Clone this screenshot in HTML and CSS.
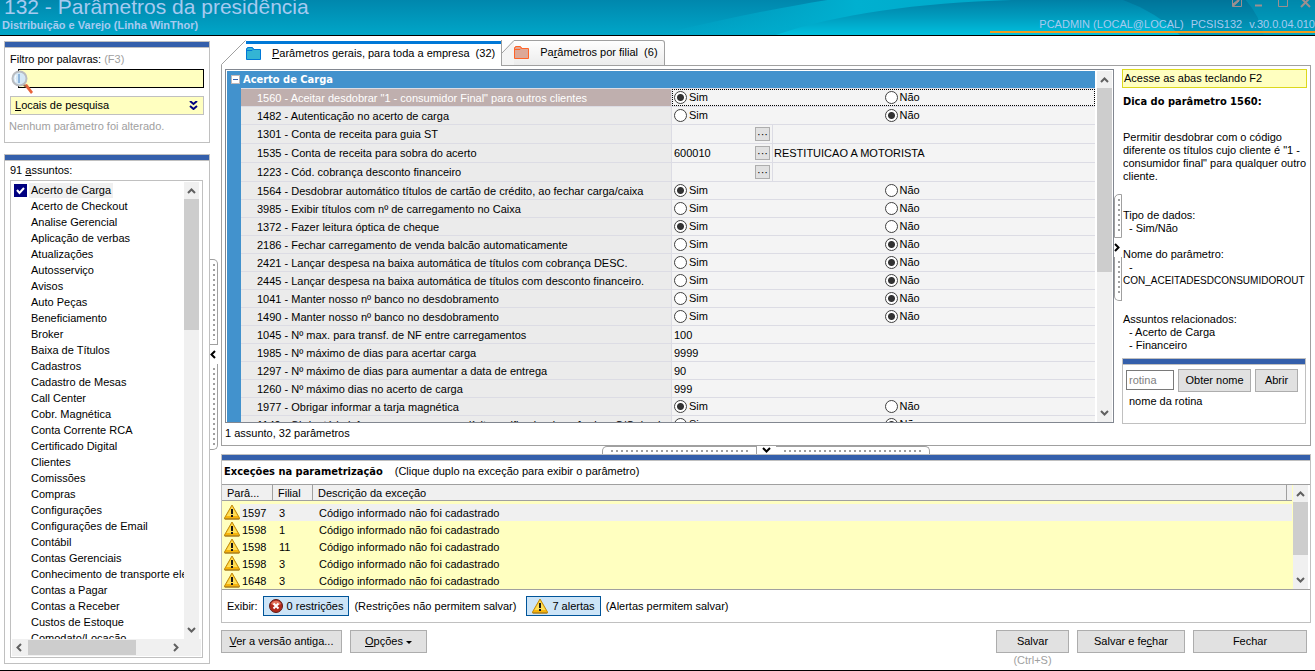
FILE: index.html
```html
<!DOCTYPE html>
<html lang="pt-BR">
<head>
    <meta charset="UTF-8">
    <meta name="viewport" content="width=device-width, initial-scale=1.0">
    <title>132 - Parâmetros da presidência</title>
    <link rel="stylesheet" href="styles.css">
</head>
<body>
    <!-- icons -->
    <svg class="sprites" aria-hidden="true">
        <symbol id="i-up" viewBox="0 0 9 6"><path d="M1 5 4.500 1.500 8 5" fill="none" stroke="currentColor" stroke-width="2"/></symbol>
        <symbol id="i-down" viewBox="0 0 9 6"><path d="M1 1 4.500 4.500 8 1" fill="none" stroke="currentColor" stroke-width="2"/></symbol>
        <symbol id="i-left" viewBox="0 0 6 9"><path d="M5 1 1.500 4.500 5 8" fill="none" stroke="currentColor" stroke-width="2"/></symbol>
        <symbol id="i-right" viewBox="0 0 6 9"><path d="M1 1 4.500 4.500 1 8" fill="none" stroke="currentColor" stroke-width="2"/></symbol>
        <symbol id="i-folder" viewBox="0 0 15 13"><path d="M.5 12.500V1.500h1V.5h5v1h1v1h7v10z" fill="var(--fill)"/><path d="M.5 12.500V1.500h1V.5h5v1h1v1h7v10zM1 3.500h5l1-1" fill="none" stroke="currentColor"/></symbol>
        <symbol id="i-warn" viewBox="0 0 16 16">
            <path d="M8 1 15.500 14v1H.5v-1z" fill="#f6b40c" stroke="#c08a10" stroke-linejoin="round"/>
            <path d="M8 2.500 13.500 12H2.500z" fill="#ffdf58"/>
            <path d="M1 15h14" stroke="#a07820"/>
            <path d="M7 5h2v5H7zM7 11h2v2H7z" fill="#181818"/>
        </symbol>
        <symbol id="i-error" viewBox="0 0 14 14">
            <circle cx="7" cy="7" r="6.500" fill="#b02a1c" stroke="#5e1c18"/>
            <path d="M2 5a5.500 5.500 0 0 1 10 0q-5 3-10 0z" fill="#e2735c"/>
            <path d="M4.500 4.500l5 5m0-5l-5 5" stroke="#fff" stroke-width="2"/>
        </symbol>
    </svg>

    <header class="titlebar">
        <svg class="waves" viewBox="0 0 660 35" preserveAspectRatio="none" aria-hidden="true">
            <defs>
                <linearGradient id="glow" x1="0" x2="1" y1="0" y2="0"><stop offset="0" stop-color="#00b0d0" stop-opacity="0"/><stop offset=".5" stop-color="#00b0d0"/><stop offset="1" stop-color="#00a4c6"/></linearGradient>
                <linearGradient id="sea" x1="0" x2="0" y1="0" y2="1"><stop offset="0" stop-color="#0080a6"/><stop offset=".5" stop-color="#009dbf"/><stop offset="1" stop-color="#00c0de"/></linearGradient>
            </defs>
            <path d="M0 35C60 20 120 8 170 0H400C270 4 180 16 118 35z" fill="url(#glow)"/>
            <path d="M118 35C180 14 260 3 355 0H660V35z" fill="url(#sea)"/>
            <path d="M467 0Q500 12 524 35H660V0z" fill="#005f85" fill-opacity=".35"/>
            <path d="M590 0Q604 16 608 35H660V0z" fill="#00b6d4" fill-opacity=".3"/>
        </svg>
        <div class="titles">
            <h1>132 - Parâmetros da presidência</h1>
            <p>Distribuição e Varejo (Linha WinThor)</p>
        </div>
        <div class="session">
            <div class="window-buttons">
                <svg width="82" height="8" viewBox="0 0 82 8" fill="none" stroke="#9c8f90" aria-hidden="true">
                    <path d="M1.500 0v6.500h9V0"/><path d="M2 6.500V4l6-5v2z" fill="#9c8f90"/>
                    <path d="M24 5.500h7" stroke-width="2"/><path d="M47.500 0v6.500h9V0"/>
                    <path d="M70 7l9-9M70-2l9 9" stroke-width="2"/>
                </svg>
            </div>
            <p><span>PCADMIN (LOCAL@LOCAL)</span><span>PCSIS132</span><span>v.30.0.04.010</span></p>
        </div>
    </header>

    <div class="workspace">
        <aside class="sidebar">
            <section class="panel filter">
                <label for="filtro">Filtro por palavras: <span class="muted">(F3)</span></label>
                <div class="search">
                    <input type="text" id="filtro">
                    <svg class="lens" viewBox="0 0 22 26" aria-hidden="true">
                        <path d="M13 16l3-1 6 8-2 2z" fill="#e8623a"/>
                        <path d="M12 15l3 3" stroke="#9a6a4a" stroke-width="2"/>
                        <circle cx="8.500" cy="9.500" r="7" fill="#d5e8f6" stroke="#b9bcc0" stroke-width="2"/>
                        <path d="M8 5v9" stroke="#8fb6dc" stroke-width="2"/>
                        <path d="M5 6q-2 3 0 7" stroke="#fff" fill="none"/>
                    </svg>
                </div>
                <button type="button" class="places"><span><u>L</u>ocais de pesquisa</span>
                    <svg width="9" height="9" viewBox="0 0 9 9" fill="none" stroke="#000080" stroke-width="2" aria-hidden="true"><path d="M1 0l3.500 3L8 0M1 5l3.500 3L8 5"/></svg>
                </button>
                <p class="muted">Nenhum parâmetro foi alterado.</p>
            </section>

            <section class="panel subjects">
                <h2>91 <u>a</u>ssuntos:</h2>
                <div class="listbox">
                    <ul id="assuntos"></ul>
                    <div class="vscroll">
                        <svg class="arrow"><use href="#i-up"/></svg>
                        <div class="track"><div class="thumb thumb-subjects"></div></div>
                        <svg class="arrow"><use href="#i-down"/></svg>
                    </div>
                    <div class="hscroll">
                        <svg class="arrow-h"><use href="#i-left"/></svg>
                        <div class="track"><div class="thumb"></div></div>
                        <svg class="arrow-h"><use href="#i-right"/></svg>
                    </div>
                </div>
            </section>
        </aside>

        <div class="splitter">
            <div class="grip"></div>
            <svg class="arrow-h"><use href="#i-left"/></svg>
            <div class="grip end"></div>
        </div>

        <main>
            <nav class="tabs" role="tablist">
                <button type="button" role="tab" aria-selected="true" class="tab active">
                    <svg class="slant" viewBox="0 0 25 26" aria-hidden="true"><path d="M0 26V25L24 0h1v26z" fill="#fff"/><path d="M.5 26V24.500L24.500.5" fill="none" stroke="#a0a0a0"/></svg>
                    <svg class="folder blue"><use href="#i-folder"/></svg>
                    <span><u>P</u>arâmetros gerais, para toda a empresa &nbsp;(32)</span>
                </button>
                <button type="button" role="tab" aria-selected="false" class="tab">
                    <svg class="slant" viewBox="0 0 12 25" aria-hidden="true"><path d="M0 25V13L12 0v25z" fill="#f4f4f4"/><path d="M0 13L12 .5" fill="none" stroke="#a0a0a0"/></svg>
                    <svg class="folder orange"><use href="#i-folder"/></svg>
                    <span>Pa<u>r</u>âmetros por filial &nbsp;(6)</span>
                </button>
            </nav>

            <section class="tab-page">
                <div class="grid-side">
                    <div class="grid">
                        <div class="grid-body">
                            <h2><button type="button" class="collapse" aria-label="Recolher"></button>Acerto de Carga</h2>
                            <table class="params">
                                <colgroup><col class="col-name"><col></colgroup>
                                <tbody id="parametros"></tbody>
                            </table>
                        </div>
                        <div class="vscroll">
                            <svg class="arrow"><use href="#i-up"/></svg>
                            <div class="track"><div class="thumb thumb-grid"></div></div>
                            <svg class="arrow"><use href="#i-down"/></svg>
                        </div>
                    </div>
                    <p class="status">1 assunto, 32 parâmetros</p>
                </div>

                <div class="splitter right">
                    <div class="grip"></div>
                    <svg class="arrow-h"><use href="#i-right"/></svg>
                    <div class="grip end"></div>
                </div>

                <aside class="tips">
                    <p class="hint">Acesse as abas teclando F2</p>
                    <div class="tip-text">
                        <h3>Dica do parâmetro 1560:</h3>
                        <p>Permitir desdobrar com o código diferente os títulos cujo cliente é "1 - consumidor final" para qualquer outro cliente.</p>
                        <dl>
                            <dt>Tipo de dados:</dt><dd>- Sim/Não</dd>
                            <dt>Nome do parâmetro:</dt><dd>-</dd>
                        </dl>
                        <p class="param-name">CON_ACEITADESDCONSUMIDOROUT</p>
                        <dl>
                            <dt>Assuntos relacionados:</dt><dd>- Acerto de Carga</dd><dd>- Financeiro</dd>
                        </dl>
                    </div>
                    <div class="panel routine">
                        <div class="routine-row">
                            <input type="text" placeholder="rotina" aria-label="rotina">
                            <button type="button" class="btn">Obter nome</button>
                            <button type="button" class="btn">Abrir</button>
                        </div>
                        <p>nome da rotina</p>
                    </div>
                </aside>
            </section>

            <div class="splitter-h">
                <div class="grip"></div>
                <svg class="arrow"><use href="#i-down"/></svg>
                <div class="grip end"></div>
            </div>

            <section class="panel exceptions">
                <p class="exceptions-title"><b>Exceções na parametrização</b><span>(Clique duplo na exceção para exibir o parâmetro)</span></p>
                <div class="exceptions-list">
                    <table>
                        <colgroup><col class="col-param"><col class="col-branch"><col><col class="col-rest"></colgroup>
                        <thead><tr><th>Parâ...</th><th>Filial</th><th>Descrição da exceção</th><th></th></tr></thead>
                        <tbody id="excecoes"></tbody>
                    </table>
                    <div class="vscroll">
                        <svg class="arrow"><use href="#i-up"/></svg>
                        <div class="track"><div class="thumb thumb-exceptions"></div></div>
                        <svg class="arrow"><use href="#i-down"/></svg>
                    </div>
                </div>
                <div class="show">
                    <span>Exibir:</span>
                    <button type="button" class="toggle" aria-pressed="true"><svg width="14" height="14"><use href="#i-error"/></svg>0 restrições</button>
                    <span class="note">(Restrições não permitem salvar)</span>
                    <button type="button" class="toggle" aria-pressed="true"><svg width="16" height="16"><use href="#i-warn"/></svg>7 alertas</button>
                    <span>(Alertas permitem salvar)</span>
                </div>
            </section>

            <footer class="actions">
                <button type="button" class="btn old"><u>V</u>er a versão antiga...</button>
                <button type="button" class="btn options"><u>O</u>pções <i class="caret"></i></button>
                <div class="save">
                    <button type="button" class="btn">Salvar</button>
                    <small>(Ctrl+S)</small>
                </div>
                <button type="button" class="btn save-close">Salvar e fe<u>c</u>har</button>
                <button type="button" class="btn close">Fechar</button>
            </footer>
        </main>
    </div>

    <script>
        const assuntos = ["Acerto de Carga", "Acerto de Checkout", "Analise Gerencial", "Aplicação de verbas",
            "Atualizações", "Autosserviço", "Avisos", "Auto Peças", "Beneficiamento", "Broker", "Baixa de Títulos",
            "Cadastros", "Cadastro de Mesas", "Call Center", "Cobr. Magnética", "Conta Corrente RCA",
            "Certificado Digital", "Clientes", "Comissões", "Compras", "Configurações", "Configurações de Email",
            "Contábil", "Contas Gerenciais", "Conhecimento de transporte eletrônico", "Contas a Pagar",
            "Contas a Receber", "Custos de Estoque", "Comodato/Locação"];

        // tipo: S = Sim, N = Não, - = sem escolha, conta = campo com busca, valor = texto
        const parametros = [
            ["1560", 'Aceitar desdobrar "1 - consumidor Final" para outros clientes', "S"],
            ["1482", "Autenticação no acerto de carga", "N"],
            ["1301", "Conta de receita para guia ST", "conta", "", ""],
            ["1535", "Conta de receita para sobra do acerto", "conta", "600010", "RESTITUICAO A MOTORISTA"],
            ["1223", "Cód. cobrança desconto financeiro", "conta", "", ""],
            ["1564", "Desdobrar automático títulos de cartão de crédito, ao fechar carga/caixa", "S"],
            ["3985", "Exibir títulos com nº de carregamento no Caixa", "-"],
            ["1372", "Fazer leitura óptica de cheque", "S"],
            ["2186", "Fechar carregamento de venda balcão automaticamente", "N"],
            ["2421", "Lançar despesa na baixa automática de títulos com cobrança DESC.", "N"],
            ["2445", "Lançar despesa na baixa automática de títulos com desconto financeiro.", "N"],
            ["1041", "Manter nosso nº banco no desdobramento", "N"],
            ["1490", "Manter nosso nº banco no desdobramento", "N"],
            ["1045", "Nº max. para transf. de NF entre carregamentos", "valor", "100"],
            ["1985", "Nº máximo de dias para acertar carga", "valor", "9999"],
            ["1297", "Nº máximo de dias para aumentar a data de entrega", "valor", "90"],
            ["1260", "Nº máximo dias no acerto de carga", "valor", "999"],
            ["1977", "Obrigar informar a tarja magnética", "S"],
            ["1149", "Obrigatório informar nos processos dígito verificador da agência e C/C de cheque", "N"]
        ];

        const excecoes = [["1597", "3"], ["1598", "1"], ["1598", "11"], ["1598", "3"], ["1648", "3"]];

        function celulaValor([codigo, , tipo, valor, descricao]) {
            if (tipo === "conta") {
                return `<div class="lookup"><span>${valor}</span><button type="button" aria-label="Buscar">···</button><span class="found">${descricao}</span></div>`;
            }
            if (tipo === "valor") return `<div class="plain">${valor}</div>`;
            return `<div class="choice">
                <label><input type="radio" name="p${codigo}" ${tipo === "S" ? "checked" : ""}>Sim</label>
                <label><input type="radio" name="p${codigo}" ${tipo === "N" ? "checked" : ""}>Não</label></div>`;
        }

        document.getElementById("assuntos").innerHTML = assuntos.map((nome, i) =>
            `<li><label class="${i === 0 ? "current" : ""}"><input type="checkbox" ${i === 0 ? "checked" : ""}><span>${nome}</span></label></li>`).join("");

        document.getElementById("parametros").innerHTML = parametros.map((p, i) =>
            `<tr class="${i === 0 ? "selected" : ""} ${p[2] === "conta" ? "tall" : ""}"><th scope="row">${p[0]} - ${p[1]}</th><td>${celulaValor(p)}</td></tr>`).join("");

        document.getElementById("excecoes").innerHTML = excecoes.map(([codigo, filial]) =>
            `<tr><td><div class="code"><svg width="16" height="16"><use href="#i-warn"/></svg><span>${codigo}</span></div></td><td>${filial}</td><td>Código informado não foi cadastrado</td><td></td></tr>`).join("");
    </script>
</body>
</html>
```
FILE: styles.css
```css
* {
    box-sizing: border-box;
}
body {
    margin: 0;
    height: 100vh;
    display: flex;
    flex-direction: column;
    overflow: hidden;
    border-bottom: 1px solid #000;
    background-color: #fff;
    color: #000;
    font-family: "Liberation Sans", Arial, sans-serif;
    font-size: 11px;
    line-height: 13px;
}
h1, h2, h3, p, ul, dl, dd {
    margin: 0;
    padding: 0;
}
button, input {
    font: inherit;
    color: inherit;
    margin: 0;
}
svg {
    flex: none;
}
.sprites {
    display: none;
}
.muted {
    color: #a0a0a0;
}

/* title bar */
.titlebar {
    position: relative;
    flex: none;
    height: 36px;
    display: flex;
    justify-content: space-between;
    align-items: flex-end;
    overflow: hidden;
    border-bottom: 1px solid #000;
    background: linear-gradient(#0087ad, #00a6c8);
    color: #a6caf0;
}
.waves {
    position: absolute;
    right: 0;
    top: 0;
    width: 50%;
    height: 100%;
}
.titles {
    padding: 0 0 3px 2px;
}
.titles h1 {
    padding-left: 2px;
    font-size: 21px;
    line-height: 24px;
    font-weight: normal;
}
.titles p {
    font-weight: bold;
}
.session {
    position: relative;
    width: 325px;
    height: 33px;
    display: flex;
    flex-direction: column;
    justify-content: space-between;
    align-items: flex-end;
    margin-bottom: 2px;
    border-bottom: 2px solid #f29a1c;
}
.window-buttons {
    height: 8px;
    padding-right: 2px;
}
.window-buttons svg {
    display: block;
}
.session p {
    display: flex;
    gap: 7px;
    white-space: nowrap;
}

.workspace {
    flex: 1;
    min-height: 0;
    display: flex;
    padding: 0 4px;
}

/* boxes with a blue bar on top */
.panel {
    border: 1px solid #c0c0c0;
    background-color: #fff;
}
.panel::before {
    content: "";
    display: block;
    flex: none;
    height: 5px;
    background-color: #345fab;
    border-bottom: 1px solid #c0c0c0;
}

/* sidebar */
.sidebar {
    flex: none;
    width: 206px;
    display: flex;
    flex-direction: column;
    gap: 11px;
    padding: 5px 0 6px;
}
.filter {
    padding-bottom: 9px;
}
.filter > label, .filter > p {
    display: block;
    margin: 5px 5px 3px;
}
.filter > p {
    margin: 5px 4px 0;
}
.search {
    position: relative;
    padding: 0 5px 0 13px;
}
.search input {
    display: block;
    width: 100%;
    height: 19px;
    padding: 0 4px 0 16px;
    border: 1px solid #000;
    background-color: #ffffc0;
}
.lens {
    position: absolute;
    left: 6px;
    top: 0;
    width: 22px;
    height: 26px;
}
.places {
    display: flex;
    justify-content: space-between;
    align-items: center;
    width: 194px;
    height: 19px;
    margin: 8px 5px 0;
    padding: 0 5px 0 4px;
    border: 1px solid #c0c0c0;
    background-color: #ffffc0;
}
.subjects {
    flex: 1;
    min-height: 0;
    display: flex;
    flex-direction: column;
}
.subjects h2 {
    margin: 3px 5px 2px;
    font-size: 11px;
    line-height: 13px;
    font-weight: normal;
}
.listbox {
    flex: 1;
    min-height: 0;
    margin: 1px 6px 5px 5px;
    padding: 1px;
    border: 1px solid #c0c0c0;
    display: grid;
    grid-template-columns: 1fr 17px;
    grid-template-rows: 1fr 17px;
}
.listbox ul {
    list-style: none;
    overflow: hidden;
    min-height: 0;
}
.listbox label {
    display: flex;
    align-items: center;
    gap: 2px;
    height: 16px;
    padding-left: 2px;
    white-space: nowrap;
}
.listbox input {
    appearance: none;
    flex: none;
    width: 13px;
    height: 13px;
}
.listbox input:checked {
    background: #000080 url("data:image/svg+xml,%3Csvg xmlns='http://www.w3.org/2000/svg' viewBox='0 0 13 13'%3E%3Cpath d='M3 6l2.500 3L10 4' fill='none' stroke='white' stroke-width='2'/%3E%3C/svg%3E");
}
.listbox span {
    padding: 1px 2px;
}
.listbox .current span {
    background-color: #f0f0f0;
}
.hscroll {
    grid-column: 1 / 3;
    display: flex;
    align-items: center;
    background-color: #f0f0f0;
    padding: 0 22px 0 4px;
}
.hscroll .track {
    flex: 1;
    display: flex;
    height: 100%;
    padding: 1px 8px 1px 6px;
}
.hscroll .thumb {
    width: 79%;
}

/* scroll bars */
.vscroll {
    flex: none;
    width: 17px;
    display: flex;
    flex-direction: column;
    align-items: center;
    padding: 6px 0;
    border-right: 2px solid #fff;
    background-color: #f0f0f0;
}
.vscroll .track {
    flex: 1;
    width: 100%;
    padding: 5px 0;
}
.arrow {
    width: 9px;
    height: 6px;
    color: #606060;
}
.arrow-h {
    width: 6px;
    height: 9px;
    color: #606060;
}
.thumb {
    background-color: #cdcdcd;
}
.thumb-subjects {
    height: 31%;
}
.thumb-grid {
    height: 58%;
}
.thumb-exceptions {
    height: 75%;
}

/* splitters */
.splitter {
    flex: none;
    align-self: flex-start;
    width: 11px;
    margin-top: 223px;
    display: flex;
    flex-direction: column;
    align-items: flex-start;
    gap: 5px;
}
.splitter .arrow-h, .splitter-h .arrow {
    color: #000;
}
.splitter .grip {
    width: 8px;
    height: 86px;
    border: 1px solid #a0a0a0;
    border-left: none;
    border-radius: 0 5px 0 0;
    padding: 4px 2px;
}
.splitter .grip::before, .splitter-h .grip::before {
    content: "";
    display: block;
    height: 100%;
    width: 2px;
    margin-left: 1px;
    background: repeating-linear-gradient(#a0a0a0 0 2px, #fff 2px 5px);
}
.splitter .end {
    border-radius: 0 0 5px 0;
    border-top: none;
}
.splitter.right {
    width: 8px;
    margin-top: 125px;
}
.splitter.right .grip {
    height: 44px;
    border: 1px solid #a0a0a0;
    border-radius: 5px 0 0 0;
}
.splitter.right .end {
    border-top: none;
    border-radius: 0 0 0 5px;
}
.splitter-h {
    flex: none;
    height: 8px;
    width: 328px;
    margin: 0 auto;
    display: flex;
    align-items: center;
    gap: 5px;
}
.splitter-h .grip {
    flex: 1;
    height: 8px;
    padding: 3px 8px;
    border: 1px solid #a0a0a0;
    border-bottom: none;
    border-radius: 5px 0 0 0;
}
.splitter-h .grip::before {
    width: 100%;
    height: 2px;
    margin: 0;
    background: repeating-linear-gradient(90deg, #a0a0a0 0 2px, #fff 2px 5px);
}
.splitter-h .end {
    border-left: none;
    border-radius: 0 5px 0 0;
}

/* main area */
main {
    flex: 1;
    min-width: 0;
    display: flex;
    flex-direction: column;
    padding: 4px 0 3px;
}
.tabs {
    flex: none;
    display: flex;
    height: 25px;
}
.tab {
    display: flex;
    align-items: center;
    height: 25px;
    padding: 0 6px 0 0;
    border: none;
    border-right: 1px solid #a0a0a0;
    border-radius: 0 3px 0 0;
    background: linear-gradient(#fff, #ececec);
    box-shadow: inset 0 1px 0 #a0a0a0;
    white-space: nowrap;
}
.tab .slant {
    width: 12px;
    height: 25px;
    background-color: #fff;
}
.tab.active {
    position: relative;
    height: 26px;
    padding-right: 6px;
    border-radius: 0;
    background: linear-gradient(#0078d7, #0078d7) no-repeat 24px 1px / 100% 3px, #fff;
    box-shadow: none;
}
.tab.active .slant {
    width: 25px;
    height: 26px;
}
.folder {
    width: 15px;
    height: 13px;
    margin-right: 11px;
}
.blue {
    --fill: #34b4d4;
    color: #0078d7;
}
.orange {
    --fill: #dca898;
    color: #ff6428;
}
.tab-page {
    flex: 1;
    min-height: 0;
    display: flex;
    border: 1px solid #a0a0a0;
    padding: 3px 3px 0;
}
.grid-side {
    flex: 1;
    min-width: 0;
    display: flex;
    flex-direction: column;
}
.grid {
    flex: 1;
    min-height: 0;
    display: flex;
    gap: 2px;
    padding: 1px 0 0 1px;
    border: 1px solid #828790;
}
.grid .vscroll {
    width: 16px;
    border-right-width: 1px;
}
.grid-body {
    flex: 1;
    min-width: 0;
    overflow: hidden;
    padding-left: 14px;
    background-color: #4292cd;
}
.grid-body h2 {
    display: flex;
    align-items: center;
    gap: 3px;
    height: 17px;
    margin-left: -10px;
    color: #fff;
    font-family: "DejaVu Sans Condensed", sans-serif;
    font-size: 11px;
    font-weight: bold;
}
.collapse {
    width: 9px;
    height: 9px;
    padding: 0;
    border: 1px solid #c0b8b8;
    background: linear-gradient(#345fab, #345fab) no-repeat center / 5px 1px, #fff;
}
.params {
    width: 100%;
    table-layout: fixed;
    border-collapse: separate;
    border-spacing: 0;
    border-top: 1px solid #dcdce4;
    background-color: #f4f4f4;
}
.col-name {
    width: 431px;
}
.params th {
    padding: 1px 4px 0 16px;
    overflow: hidden;
    border-right: 1px solid #dcdce4;
    border-bottom: 1px solid #dcdce4;
    background-color: #ebebeb;
    font-weight: normal;
    text-align: left;
    white-space: nowrap;
}
.params td {
    height: 18px;
    padding: 0;
    border-bottom: 1px solid #dcdce4;
}
.params .tall td {
    height: 19px;
}
.params .selected th {
    background-color: #bfafae;
    color: #fff;
}
.params .selected .choice {
    outline: 1px dotted #000;
    outline-offset: -1px;
}
.choice {
    display: grid;
    grid-template-columns: 1fr 1fr;
    height: 17px;
    padding-left: 2px;
}
.choice label {
    display: flex;
    align-items: center;
    gap: 2px;
}
.choice input {
    appearance: none;
    width: 13px;
    height: 13px;
    border: 1px solid #404040;
    border-radius: 50%;
    background-color: #fff;
}
.choice input:checked {
    background: radial-gradient(circle, #333 0 3px, #fff 4px);
}
.plain {
    padding: 1px 0 0 2px;
}
.lookup {
    display: flex;
    align-items: center;
    height: 18px;
    padding-left: 2px;
}
.lookup span:first-child {
    width: 81px;
}
.lookup button {
    width: 15px;
    height: 14px;
    padding: 0;
    border: 1px solid #adadad;
    background-color: #e1e1e1;
    line-height: 10px;
}
.lookup .found {
    flex: 1;
    height: 18px;
    margin-left: 2px;
    padding: 3px 1px;
    border-left: 1px solid #dcdce4;
}
.status {
    padding: 4px 0 5px;
}

/* tips */
.tips {
    flex: none;
    width: 185px;
    display: flex;
    flex-direction: column;
}
.hint {
    height: 19px;
    padding: 2px 1px;
    border: 1px solid #dcd81e;
    background-color: #ffffc0;
}
.tip-text {
    flex: 1;
    padding: 7px 0 0 1px;
}
.tip-text h3 {
    margin-bottom: 23px;
    font-family: "DejaVu Sans Condensed", sans-serif;
    font-size: 11px;
}
.tip-text dt {
    margin-top: 13px;
}
.tip-text p + dl {
    margin-top: 26px;
}
.tip-text dl:first-of-type dt:first-child {
    margin-top: 26px;
}
.tip-text dd {
    padding-left: 6px;
}
.param-name {
    font-size: 10px;
}
.routine {
    height: 66px;
    margin: 0 1px 21px 0;
}
.routine-row {
    display: flex;
    gap: 4px;
    padding: 4px 3px 3px;
}
.routine input {
    width: 48px;
    height: 20px;
    margin-top: 1px;
    padding: 0 2px;
    border: 1px solid #7a7a7a;
}
.routine input::placeholder {
    color: #808080;
}
.routine .btn {
    width: 73px;
}
.routine .btn:last-child {
    width: 43px;
}
.routine p {
    padding: 0 6px;
}
.btn {
    height: 23px;
    padding: 0 6px;
    border: 1px solid #adadad;
    background-color: #e1e1e1;
    white-space: nowrap;
}

/* exceptions */
.exceptions {
    flex: none;
}
.exceptions-title {
    display: flex;
    gap: 12px;
    padding: 4px 2px 6px;
}
.exceptions-title b {
    font-family: "DejaVu Sans Condensed", sans-serif;
}
.exceptions-list {
    display: flex;
    gap: 1px;
    height: 106px;
    border-top: 1px solid #a0a0a0;
    border-bottom: 1px solid #a0a0a0;
    background-color: #ffffc0;
}
.exceptions-list table {
    flex: 1;
    table-layout: fixed;
    border-collapse: separate;
    border-spacing: 0;
    align-self: flex-start;
}
.col-param {
    width: 51px;
}
.col-branch {
    width: 40px;
}
.col-rest {
    width: 5px;
}
.exceptions-list th {
    height: 16px;
    padding: 2px 5px 0;
    border-right: 1px solid #a0a0a0;
    border-bottom: 1px solid #a0a0a0;
    background-color: #f0f0f0;
    font-weight: normal;
    line-height: 13px;
    text-align: left;
}
.exceptions-list th:last-child {
    padding: 0;
    border-right: none;
}
.exceptions-list td {
    height: 17px;
    padding: 1px 6px 0;
}
.exceptions-list td:last-child {
    padding: 0;
}
.exceptions-list tbody::before {
    content: "";
    display: block;
    height: 3px;
}
.exceptions-list td:first-child {
    padding: 0 0 0 2px;
}
.code {
    display: flex;
    align-items: flex-start;
    gap: 2px;
    height: 17px;
    line-height: 18px;
}
.exceptions-list tr:first-child td {
    background-color: #f0f0f0;
}
.exceptions-list tr:first-child td:first-child {
    background: linear-gradient(#ffffc0, #ffffc0) no-repeat 0 0 / 18px 100%, #f0f0f0;
}
.show {
    display: flex;
    align-items: center;
    gap: 5px;
    height: 32px;
    padding: 0 5px;
}
.show .note {
    margin-right: 5px;
}
.toggle {
    display: flex;
    align-items: center;
    gap: 4px;
    height: 20px;
    padding: 0 5px;
    border: 1px solid #005499;
    background-color: #cce4f7;
}

/* bottom buttons */
.actions {
    flex: none;
    display: flex;
    align-items: flex-start;
    gap: 8px;
    padding: 7px 4px 0 0;
}
.actions .old {
    width: 121px;
}
.actions .options {
    width: 77px;
}
.caret {
    display: inline-block;
    vertical-align: middle;
    border: 3px solid transparent;
    border-top-color: #000;
    border-bottom: none;
}
.save {
    display: flex;
    flex-direction: column;
    align-items: center;
    margin-left: auto;
}
.save .btn {
    width: 73px;
}
.save small {
    margin-top: 1px;
    color: #a0a0a0;
    font-size: 11px;
}
.save-close {
    width: 108px;
}
.close {
    width: 114px;
}
```
